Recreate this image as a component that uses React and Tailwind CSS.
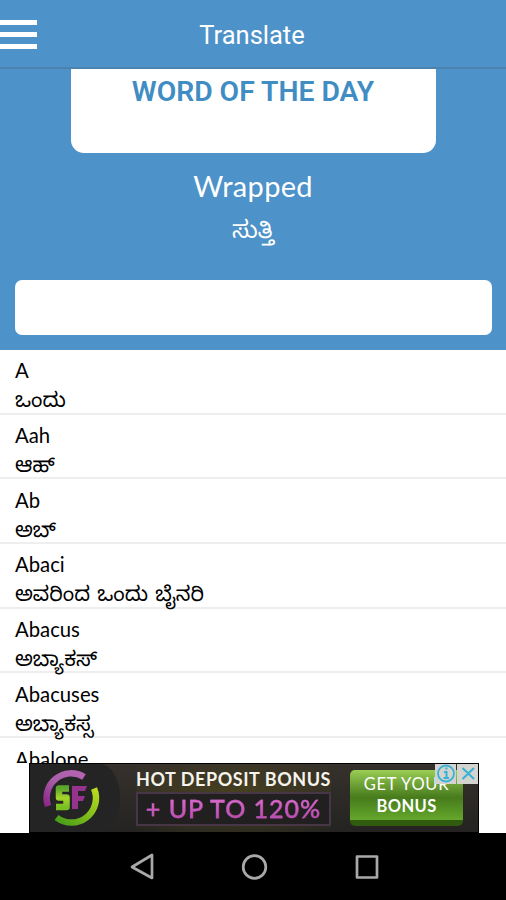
const words = [
  { en: 'A', kn: 'ಒಂದು' },
  { en: 'Aah', kn: 'ಆಹ್' },
  { en: 'Ab', kn: 'ಅಬ್' },
  { en: 'Abaci', kn: 'ಅವರಿಂದ ಒಂದು ಬೈನರಿ' },
  { en: 'Abacus', kn: 'ಅಬ್ಯಾಕಸ್' },
  { en: 'Abacuses', kn: 'ಅಬ್ಯಾಕಸ್ಸ' },
  { en: 'Abalone', kn: '' },
];

function Header() {
  return (
    <header className="grid h-[69px] shrink-0 grid-cols-[37px_1fr_37px] border-b-2 border-[#4b82b0] pt-[20px]">
      <div className="flex h-[29px] flex-col justify-between">
        <span className="h-[5px] bg-white" />
        <span className="h-[5px] bg-white" />
        <span className="h-[5px] bg-white" />
      </div>
      <h1 className="-translate-x-px text-center font-[Roboto,sans-serif] text-[25.5px] leading-[31px] text-white">Translate</h1>
    </header>
  );
}

function Row({ word }) {
  return (
    <li className="h-[64.7px] shrink-0 border-b-2 border-[#eeeeee] pl-[15px] whitespace-nowrap">
      <p className="pt-[6.4px] text-[20.3px] leading-[28px]">{word.en}</p>
      <p className="text-[20.7px] leading-[30px] [word-spacing:2px]">{word.kn}</p>
    </li>
  );
}

function Logo() {
  return (
    <svg className="ml-[13px] h-[58px] w-[58px] shrink-0" viewBox="0 0 58 58">
      <defs>
        <linearGradient id="violet" x1="0" y1="1" x2="1" y2="0">
          <stop offset="0" stopColor="#8d2789" />
          <stop offset="0.5" stopColor="#a95fa9" />
          <stop offset="1" stopColor="#b763b3" />
        </linearGradient>
        <linearGradient id="lime" x1="0" y1="1" x2="1" y2="0">
          <stop offset="0" stopColor="#459b18" />
          <stop offset="1" stopColor="#b9dc20" />
        </linearGradient>
        <linearGradient id="limeBar" x1="0" y1="0" x2="0" y2="1">
          <stop offset="0" stopColor="#5da52c" />
          <stop offset="0.5" stopColor="#a5d52c" />
          <stop offset="1" stopColor="#79bf22" />
        </linearGradient>
      </defs>
      <path d="M5 37A24.500 24.500 0 0 1 41 8" fill="none" stroke="url(#violet)" strokeWidth="6.500" />
      <path d="M51 19.500A24.500 24.500 0 0 1 13.500 48.500" fill="none" stroke="url(#lime)" strokeWidth="6.500" />
      <path d="M26 19.500H16V28.500H23.500V38H13" fill="none" stroke="url(#limeBar)" strokeWidth="6.500" strokeLinejoin="round" />
      <path d="M29 17H44L42 22H35V27H42L40 32H35V40H29Z" fill="#96338f" />
    </svg>
  );
}

function Ad() {
  return (
    <div className="relative ml-[29px] flex h-[70px] w-[450px] shrink-0 items-center overflow-hidden border border-black bg-linear-to-b from-[#36312c] to-[#242321] font-[Lato,sans-serif]">
      <div className="flex h-full w-[90px] shrink-0 items-center rounded-r-[20px_50%] bg-[#242424]">
        <Logo />
      </div>
      <div className="ml-[16px] flex h-full w-[195px] shrink-0 flex-col bg-radial from-[#49421f] to-transparent whitespace-nowrap text-[#f6f4ed]">
        <p className="pt-[4px] text-[18px] leading-[22px] font-bold tracking-[0.55px]">HOT DEPOSIT BONUS</p>
        <div className="mt-[2px] flex h-[34px] items-center justify-center border-2 border-[#473646] bg-[#211f20]">
          <p className="-translate-y-px bg-linear-to-b from-[#e278d7] to-[#b142a7] bg-clip-text text-[25px] leading-[32px] font-medium tracking-[1px] text-transparent [-webkit-text-stroke:0.3px_#c65abc]">+ UP TO 120%</p>
        </div>
      </div>
      <div className="ml-[19px] h-[56px] w-[113px] shrink-0 rounded-[5px] border-b-[6px] border-[#315c10] bg-linear-to-b from-[#9ace54] via-[#477b1c] via-55% to-[#65a82b] pt-[3px] text-center text-[16.5px] leading-[22px] whitespace-nowrap text-white">
        <p className="tracking-[0.7px]">GET YOUR</p>
        <p className="font-bold tracking-[0.4px]">BONUS</p>
      </div>
      <svg className="absolute top-[-1px] right-[-1px] h-[21px] w-[44px]" viewBox="0 0 44 21">
        <path d="M0 0H21V21H0ZM22 0H44V21H22Z" fill="#d3d3cf" />
        <circle cx="11" cy="10.5" r="8" fill="none" stroke="#36b2d5" strokeWidth="1.8" />
        <path d="M9 9H11.500V15M8.500 15H14M10.300 5.500H12.500M27.500 5L39 16M39 5L27.500 16" fill="none" stroke="#36b2d5" strokeWidth="2" />
      </svg>
    </div>
  );
}

function NavBar() {
  return (
    <nav className="h-[67px] shrink-0 bg-black">
      <svg className="h-[67px] w-[506px]" viewBox="0 0 506 67" fill="none" stroke="#a9a9a9" strokeWidth="2.7" strokeLinejoin="round">
        <path d="M152 22V45L132 34Z" />
        <circle cx="254.500" cy="34" r="11.300" />
        <rect x="357" y="23.500" width="20" height="21" />
      </svg>
    </nav>
  );
}

export default function App() {
  return (
    <div className="flex h-[900px] w-[506px] flex-col overflow-hidden bg-white font-[Lato,'Noto_Sans_Kannada','Noto_Sans',sans-serif] text-black">
      <section className="flex h-[350px] shrink-0 flex-col bg-[#4d92c8]">
        <Header />
        <div className="mx-auto h-[84px] w-[365px] rounded-b-[13px] bg-white pt-[6px] text-center font-[Roboto,sans-serif] text-[28.3px] leading-[34px] font-semibold whitespace-nowrap text-[#408dc3]">
          WORD OF THE DAY
        </div>
        <p className="mt-[14px] text-center text-[29px] leading-[38px] tracking-[0.3px] text-white">Wrapped</p>
        <p className="mt-[3px] h-[44px] text-center text-[24px] leading-[42px] text-white">ಸುತ್ತಿ</p>
        <div className="mt-[28px] ml-[15px] h-[55px] w-[477px] rounded-[7px] bg-white" />
      </section>
      <ul className="flex h-[413px] shrink-0 flex-col overflow-hidden">
        {words.map((word) => (
          <Row key={word.en} word={word} />
        ))}
      </ul>
      <Ad />
      <NavBar />
    </div>
  );
}
